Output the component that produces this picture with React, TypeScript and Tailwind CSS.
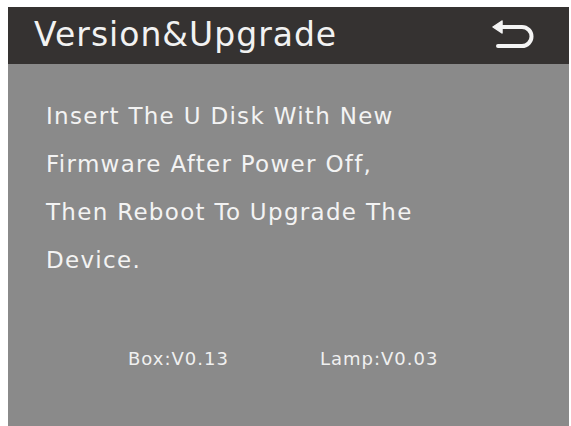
const BackIcon = () => (
    <svg width="46" height="32" viewBox="0 0 46 32" fill="none">
        <path d="M9 7 H30 A9.5 9.5 0 0 1 30 26 H6" stroke="#f4f4f4" strokeWidth="4" strokeLinecap="round" strokeLinejoin="round" />
        <path d="M1 7 L10 1 L10 13 Z" fill="#f4f4f4" stroke="#f4f4f4" strokeWidth="1.5" strokeLinejoin="round" />
    </svg>
)

const App = () => {
    const lines = [
        'Insert The U Disk With New',
        'Firmware After Power Off,',
        'Then Reboot To Upgrade The',
        'Device.',
    ]

    return (
        <div className="w-[571px] h-[426px] bg-white pl-[8px] pt-[7px] pr-[2px] overflow-hidden" style={{ fontFamily: '"DejaVu Sans", sans-serif' }}>
            <div className="h-[419px] flex flex-col bg-[#8a8a8a]">
                <div className="h-[57px] bg-[#353231] flex items-center justify-between pl-[26px] pr-[31px]">
                    <p className="text-[33px] text-[#f2f2f2] leading-none tracking-[1px] pb-[2px]">Version&amp;Upgrade</p>
                    <BackIcon />
                </div>
                <div className="flex flex-col pl-[38px] pt-[40px]">
                    {
                        lines.map((line, key) => <p key={key} className="text-[23px] text-[#f3f3f3] h-[48px] leading-[24px] tracking-[1.3px]">{line}</p>)
                    }
                </div>
                <div className="flex pl-[120px] pt-[49px] gap-[91px] text-[18px] tracking-[1px] text-[#f0f0f0]">
                    <span>Box:V0.13</span>
                    <span>Lamp:V0.03</span>
                </div>
            </div>
        </div>
    )
}

export default App;
